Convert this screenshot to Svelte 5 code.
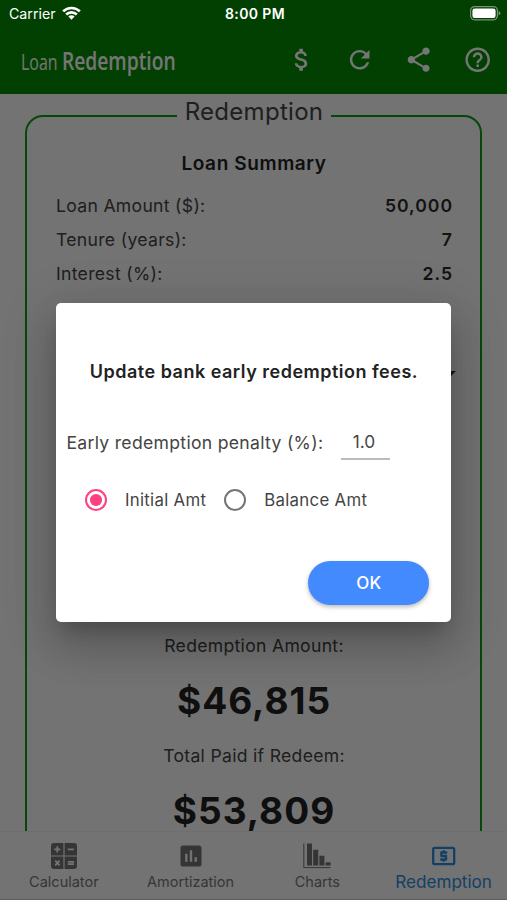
<script>
  const summary = [
    { label: 'Loan Amount ($):', value: '50,000' },
    { label: 'Tenure (years):', value: '7' },
    { label: 'Interest (%):', value: '2.5' },
  ];

  const tabs = ['Calculator', 'Amortization', 'Charts', 'Redemption'];

  let activeTab = $state('Redemption');
  let feeBase = $state('initial');
  let penalty = $state('1.0');
  let dialogOpen = $state(true);
</script>

<div class="app">
  <div class="status">
    <div class="carrier">
      <span>Carrier</span>
      <svg class="wifi" viewBox="0 0 20 15">
        <path d="M1.2 5.3 A12.6 12.6 0 0 1 18.8 5.3" />
        <path d="M4.4 8.6 A8 8 0 0 1 15.6 8.6" />
        <path class="dot" d="M10 14 L6.7 10.7 A4.7 4.7 0 0 1 13.3 10.7 Z" />
      </svg>
    </div>
    <span class="clock">8:00 PM</span>
    <svg class="battery" viewBox="0 0 31 15">
      <rect class="shell" x=".6" y=".6" width="26.8" height="13.2" rx="4" />
      <rect x="2.4" y="2.4" width="23.2" height="9.6" rx="2.3" />
      <path class="tip" d="M28.6 5 Q30.4 5.6 30.4 7.2 Q30.4 8.8 28.6 9.4 Z" />
    </svg>
  </div>

  <header>
    <h1><span class="light">Loan</span> <span class="strong">Redemption</span></h1>
    <nav class="actions">
      <button aria-label="Currency">
        <svg viewBox="0 0 24 24"><path d="M11.8 10.9c-2.27-.59-3-1.2-3-2.15 0-1.09 1.01-1.85 2.7-1.85 1.78 0 2.44.85 2.5 2.1h2.21c-.07-1.72-1.12-3.3-3.21-3.81V3h-3v2.16c-1.94.42-3.5 1.68-3.5 3.61 0 2.31 1.91 3.46 4.7 4.13 2.5.6 3 1.48 3 2.41 0 .69-.49 1.79-2.7 1.79-2.06 0-2.87-.92-2.98-2.1h-2.2c.12 2.19 1.76 3.42 3.68 3.83V21h3v-2.15c1.95-.37 3.5-1.5 3.5-3.55 0-2.84-2.43-3.81-4.7-4.4z" /></svg>
      </button>
      <button aria-label="Reset">
        <svg viewBox="0 0 24 24"><path d="M17.65 6.35C16.2 4.9 14.21 4 12 4c-4.42 0-7.99 3.58-7.99 8s3.57 8 7.99 8c3.73 0 6.84-2.55 7.73-6h-2.08c-.82 2.33-3.04 4-5.65 4-3.31 0-6-2.69-6-6s2.69-6 6-6c1.66 0 3.14.69 4.22 1.78L13 11h7V4l-2.35 2.35z" /></svg>
      </button>
      <button aria-label="Share">
        <svg viewBox="0 0 24 24"><path d="M18 16.08c-.76 0-1.44.3-1.96.77L8.91 12.7c.05-.23.09-.46.09-.7s-.04-.47-.09-.7l7.05-4.11c.54.5 1.25.81 2.04.81 1.66 0 3-1.34 3-3s-1.34-3-3-3-3 1.34-3 3c0 .24.04.47.09.7L8.04 9.81C7.5 9.31 6.79 9 6 9c-1.66 0-3 1.34-3 3s1.34 3 3 3c.79 0 1.5-.31 2.04-.81l7.12 4.16c-.05.21-.08.43-.08.65 0 1.61 1.31 2.92 2.92 2.92s2.92-1.31 2.92-2.92-1.31-2.92-2.92-2.92z" /></svg>
      </button>
      <button aria-label="Help">
        <svg viewBox="0 0 24 24"><path d="M11 18h2v-2h-2v2zm1-16C6.48 2 2 6.48 2 12s4.48 10 10 10 10-4.48 10-10S17.52 2 12 2zm0 18c-4.41 0-8-3.59-8-8s3.59-8 8-8 8 3.59 8 8-3.59 8-8 8zm0-14c-2.21 0-4 1.79-4 4h2c0-1.1.9-2 2-2s2 .9 2 2c0 2-3 1.75-3 5h2c0-2.25 3-2.5 3-5 0-2.21-1.79-4-4-4z" /></svg>
      </button>
    </nav>
  </header>

  <main>
    <fieldset>
      <legend>Redemption</legend>
      <h2>Loan Summary</h2>
      {#each summary as row}
        <div class="row">
          <span>{row.label}</span>
          <b>{row.value}</b>
        </div>
      {/each}
      <div class="picker">
        <svg viewBox="0 0 12 6"><path d="M0 0h12L6 6z" /></svg>
      </div>
      <p class="caption">Redemption Amount:</p>
      <p class="total">$46,815</p>
      <p class="caption">Total Paid if Redeem:</p>
      <p class="total">$53,809</p>
    </fieldset>
  </main>

  <footer>
    {#each tabs as tab}
      <button class="tab" class:active={tab === activeTab} onclick={() => (activeTab = tab)}>
        {#if tab === 'Calculator'}
          <svg viewBox="0 0 28 28">
            <path d="M4 1H13.4V13.4H1V4Q1 1 4 1Z M14.6 1H24Q27 1 27 4V13.4H14.6Z M1 14.6H13.4V27H4Q1 27 1 24Z M14.6 14.6H27V24Q27 27 24 27H14.6Z" />
            <path class="sign" d="M4.2 7.3h6.2M7.3 4.2v6.2M17.8 7.3h6.2M5.2 18.6l4.4 4.8M9.6 18.6L5.2 23.4M17.8 19.8h6.2M17.8 22.2h6.2" />
          </svg>
        {:else if tab === 'Amortization'}
          <svg viewBox="0 0 24 24"><path d="M19 3H5c-1.1 0-2 .9-2 2v14c0 1.1.9 2 2 2h14c1.1 0 2-.9 2-2V5c0-1.1-.9-2-2-2zM9 17H7v-7h2v7zm4 0h-2V7h2v10zm4 0h-2v-4h2v4z" /></svg>
        {:else if tab === 'Charts'}
          <svg viewBox="0 0 28 28">
            <path class="axis" d="M.8 1.5V25.6H27.5" />
            <path d="M4 1.5h5V23.6H4zM10.2 7.7h5v15.9h-5zM16.4 13.8h5v9.8h-5zM22.6 20.3h5v3.3h-5z" />
          </svg>
        {:else}
          <svg viewBox="0 0 24 24"><path d="M11 17h2v-1h1c.55 0 1-.45 1-1v-3c0-.55-.45-1-1-1h-3v-1h4V8h-2V7h-2v1h-1c-.55 0-1 .45-1 1v3c0 .55.45 1 1 1h3v1H9v2h2v1zm9-13H4c-1.11 0-1.99.89-1.99 2L2 18c0 1.11.89 2 2 2h16c1.11 0 2-.89 2-2V6c0-1.11-.89-2-2-2zm0 14H4V6h16v12z" /></svg>
        {/if}
        <span>{tab}</span>
      </button>
    {/each}
  </footer>

  {#if dialogOpen}
    <div class="scrim">
      <div class="dialog" role="dialog" aria-modal="true" aria-labelledby="fees-title">
        <h3 id="fees-title">Update bank early redemption fees.</h3>
        <label class="penalty">
          <span>Early redemption penalty (%):</span>
          <input bind:value={penalty} />
        </label>
        <div class="options">
          <label>
            <input type="radio" name="base" value="initial" bind:group={feeBase} />
            <span>Initial Amt</span>
          </label>
          <label>
            <input type="radio" name="base" value="balance" bind:group={feeBase} />
            <span>Balance Amt</span>
          </label>
        </div>
        <button class="ok" onclick={() => (dialogOpen = false)}>OK</button>
      </div>
    </div>
  {/if}
</div>

<style>
  :global(body) {
    margin: 0;
    overflow: hidden;
  }

  .app {
    position: relative;
    display: flex;
    flex-direction: column;
    width: 507px;
    height: 900px;
    overflow: hidden;
    background: #fafafa;
    color: #444;
    font-family: Inter, 'Liberation Sans', sans-serif;
    font-size: 17.6px;
    letter-spacing: 0.3px;
  }

  button {
    padding: 0;
    border: none;
    background: none;
    font: inherit;
    letter-spacing: inherit;
  }

  /* system status bar stays above the scrim */
  .status {
    position: relative;
    z-index: 2;
    display: grid;
    grid-template-columns: 1fr auto 1fr;
    align-items: center;
    box-sizing: border-box;
    height: 27px;
    padding: 0 6px 0 9px;
    color: #fff;
    font-size: 14.2px;
    letter-spacing: 0;
  }

  .carrier {
    display: flex;
    align-items: center;
    gap: 6px;
  }

  .wifi {
    width: 19px;
    height: 15px;
    fill: none;
    stroke: #fff;
    stroke-width: 2.8;
  }

  .wifi .dot {
    fill: #fff;
    stroke: none;
  }

  .clock {
    font-size: 14px;
    font-weight: 600;
    letter-spacing: 0.4px;
  }

  .battery {
    justify-self: end;
    width: 31px;
    height: 15px;
    fill: #fff;
  }

  .battery .shell {
    fill: none;
    stroke: #fff;
    stroke-opacity: 0.45;
    stroke-width: 1.2;
  }

  .battery .tip {
    opacity: 0.45;
  }

  header {
    display: flex;
    align-items: center;
    justify-content: space-between;
    box-sizing: border-box;
    height: 94px;
    margin-top: -27px;
    padding: 26px 15px 0 21px;
    background: #068b04;
    color: #fff;
  }

  h1 {
    display: flex;
    align-items: baseline;
    gap: 6px;
    margin: 0;
    font-family: 'Open Sans', sans-serif;
    font-weight: 400;
    white-space: nowrap;
    letter-spacing: 0;
    transform: scaleX(0.74);
    transform-origin: left;
  }

  .light {
    font-size: 21.5px;
  }

  .strong {
    font-size: 26px;
    font-weight: 600;
  }

  .actions {
    display: flex;
    gap: 29.3px;
  }

  .actions button,
  .actions svg {
    display: block;
    width: 29.4px;
    height: 29.4px;
    fill: #fff;
  }

  main {
    flex: 1;
    min-height: 0;
    overflow: hidden;
    padding: 1px 25px 0;
  }

  fieldset {
    box-sizing: border-box;
    height: 780px;
    margin: 0;
    padding: 0 28px 0 29px;
    border: 2.4px solid #0ca012;
    border-radius: 18px;
  }

  /* extra bottom padding drops the frame line below the middle of its title */
  legend {
    margin: 0 auto;
    padding: 0 8px 7px;
    font-size: 24px;
    line-height: 34px;
    letter-spacing: 0.3px;
  }

  h2 {
    margin: 16px 0 12px;
    color: #222;
    font-size: 19px;
    font-weight: 600;
    line-height: 24px;
    letter-spacing: 0.6px;
    text-align: center;
  }

  .row {
    display: flex;
    align-items: center;
    justify-content: space-between;
    height: 34.4px;
  }

  .row b {
    margin-right: -1px;
    color: #2a2a2a;
    font-weight: 600;
    letter-spacing: 1px;
  }

  .picker {
    display: flex;
    justify-content: flex-end;
    box-sizing: border-box;
    height: 344px;
    padding-top: 80px;
  }

  .picker svg {
    width: 12px;
    height: 6px;
    margin-right: -4px;
    fill: #333;
  }

  .caption,
  .total {
    margin: 0;
    text-align: center;
  }

  .caption {
    line-height: 22px;
  }

  .total {
    padding: 24px 0;
    color: #222;
    font-size: 37px;
    font-weight: 700;
    line-height: 40px;
    letter-spacing: 1px;
  }

  footer {
    display: grid;
    grid-template-columns: repeat(4, 1fr);
    height: 69px;
    border-top: 1px solid #f0f0f0;
    border-bottom: 1px solid #ccc;
    box-sizing: border-box;
  }

  .tab {
    display: flex;
    flex-direction: column;
    align-items: center;
    padding: 10px 0 0 1px;
    color: #777;
    font-size: 14.5px;
    line-height: 24px;
    letter-spacing: 0;
  }

  .tab svg {
    width: 28px;
    height: 28px;
    fill: #757575;
  }

  .tab .sign {
    fill: none;
    stroke: #fafafa;
    stroke-width: 1.8;
  }

  .tab .axis {
    fill: none;
    stroke: #757575;
    stroke-width: 1;
  }

  .tab.active {
    padding-left: 0;
    color: #2b8de0;
    font-size: 17.1px;
    line-height: 23px;
  }

  .tab.active svg {
    width: 29.4px;
    fill: #2b8de0;
  }

  .scrim {
    position: absolute;
    inset: 0;
    z-index: 1;
    background: rgba(0, 0, 0, 0.54);
  }

  .dialog {
    display: flex;
    flex-direction: column;
    box-sizing: border-box;
    width: 395px;
    height: 319px;
    margin: 303px 0 0 56.4px;
    padding: 57px 10px 0;
    border-radius: 5px;
    background: #fff;
    box-shadow: 0 13px 18px -8px rgba(0, 0, 0, 0.2), 0 26px 42px 3px rgba(0, 0, 0, 0.14), 0 10px 50px 9px rgba(0, 0, 0, 0.12);
  }

  h3 {
    margin: 0;
    color: #222;
    font-size: 18px;
    font-weight: 600;
    line-height: 24px;
    letter-spacing: 0.5px;
    text-align: center;
    white-space: nowrap;
  }

  .penalty {
    display: flex;
    align-items: center;
    justify-content: space-between;
    height: 36px;
    margin: 40px 51px 0 0;
    white-space: nowrap;
  }

  .penalty input {
    box-sizing: border-box;
    width: 49px;
    height: 36px;
    padding: 0 4px 0 0;
    border: none;
    border-bottom: 2px solid #bbb;
    outline: none;
    background: none;
    color: #444;
    font: inherit;
    font-size: 17.3px;
    text-align: center;
  }

  .options {
    display: flex;
    gap: 18px;
    margin: 28px 0 0 18.5px;
    font-size: 16.8px;
  }

  .options label {
    display: flex;
    align-items: center;
    gap: 18px;
    height: 24px;
    white-space: nowrap;
  }

  .options input {
    appearance: none;
    display: grid;
    place-items: center;
    box-sizing: border-box;
    flex: none;
    width: 22px;
    height: 22px;
    margin: 0;
    border: 2.4px solid #757575;
    border-radius: 50%;
  }

  .options input:checked {
    border-color: #ff4081;
  }

  .options input:checked::before {
    content: '';
    width: 11.5px;
    height: 11.5px;
    border-radius: 50%;
    background: #ff4081;
  }

  .ok {
    align-self: flex-end;
    width: 121px;
    height: 44px;
    margin: 49px 12px 0 0;
    border-radius: 22px;
    background: #448aff;
    color: #fff;
    font-size: 17px;
    font-weight: 500;
    box-shadow: 0 2px 4px rgba(0, 0, 0, 0.28);
  }
</style>
